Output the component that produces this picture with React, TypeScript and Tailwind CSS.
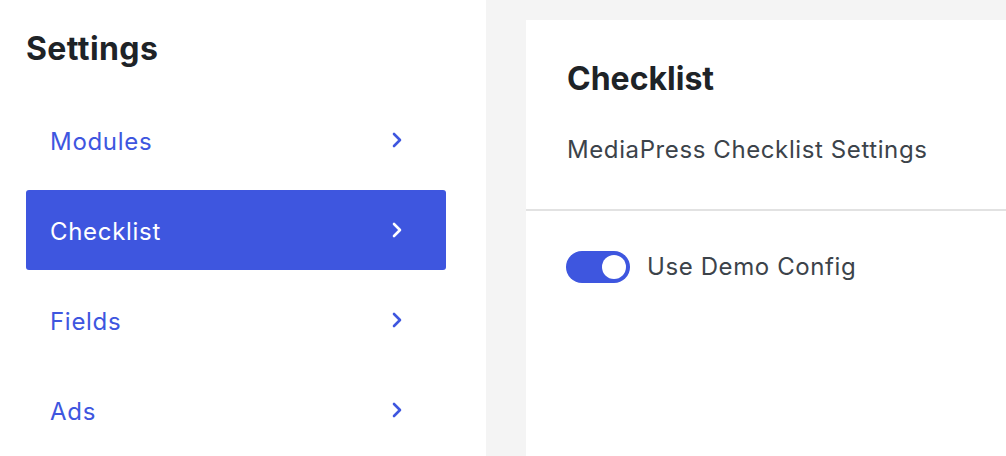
function Chevron() {
  return (
    <svg width="10" height="16" viewBox="0 0 10 16" fill="none" className="shrink-0">
      <path d="M2 2l6 6-6 6" stroke="currentColor" strokeWidth="2.6" strokeLinecap="round" strokeLinejoin="round" />
    </svg>
  )
}

const items = ['Modules', 'Checklist', 'Fields', 'Ads']

export default function App() {
  return (
    <div className="flex h-[456px] w-[1006px] overflow-hidden bg-[#f4f4f4] font-['Inter',sans-serif]">
      <aside className="w-[486px] shrink-0 bg-white pl-[26px] pr-[40px] pt-[30px]">
        <h1 className="text-[32px] font-bold leading-[38px] tracking-[0.4px] text-[#1e2327]">Settings</h1>
        <nav className="mt-[32px] flex flex-col gap-[10px]">
          {items.map((item) => {
            const active = item === 'Checklist'
            return (
              <div
                key={item}
                className={
                  active
                    ? 'flex h-[80px] items-center justify-between rounded-[3px] bg-[#3e56df] pl-[24px] pr-[44px] text-white'
                    : 'flex h-[80px] items-center justify-between pl-[24px] pr-[44px] text-[#3e56df]'
                }
              >
                <span className="pt-[3px] text-[24px] leading-none tracking-[0.7px]">{item}</span>
                <Chevron />
              </div>
            )
          })}
        </nav>
      </aside>
      <main className="flex-1 pl-[40px] pt-[20px]">
        <div className="h-full bg-white">
          <div className="border-b-2 border-[#e2e2e2] px-[41px] pb-[43px] pt-[40px]">
            <h2 className="text-[32px] font-bold leading-[38px] text-[#1e2327]">Checklist</h2>
            <p className="mt-[36px] text-[24px] leading-[32px] tracking-[0.6px] text-[#3c434a]">MediaPress Checklist Settings</p>
          </div>
          <div className="flex items-center gap-[17px] px-[40px] pt-[40px]">
            <div className="flex h-[32px] w-[64px] items-center justify-end rounded-full bg-[#3e56df] px-[4px]">
              <div className="h-[24px] w-[24px] rounded-full bg-white" />
            </div>
            <span className="text-[24px] leading-[32px] tracking-[0.6px] text-[#3c434a]">Use Demo Config</span>
          </div>
        </div>
      </main>
    </div>
  )
}
